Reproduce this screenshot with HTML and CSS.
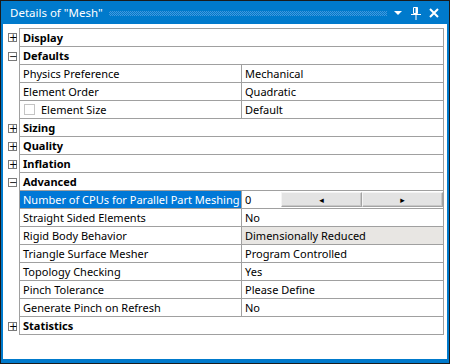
FILE: index.html
```html
<!DOCTYPE html>
<html lang="en">
<head>
    <meta charset="UTF-8">
    <title>Details of "Mesh"</title>
    <link rel="stylesheet" href="styles.css">
</head>
<body>
    <div class="window">
        <div class="titlebar">
            <span class="title">Details of "Mesh"</span>
            <span class="grip"></span>
            <span class="tb-icons">
                <svg width="10" height="6" viewBox="0 0 10 6"><path d="M1 1h8L5 5z" fill="#fff"/></svg>
                <svg width="12" height="14" viewBox="0 0 12 14"><path d="M3.5 1.5h4v6h-4z" fill="none" stroke="#fff"/><path d="M6.5 1.5v6" stroke="#fff" stroke-width="2"/><path d="M1 8.5h10M6 9v5" stroke="#fff"/></svg>
                <svg width="10" height="10" viewBox="0 0 10 10"><path d="M1 1l8 8M9 1l-8 8" stroke="#fff" stroke-width="2"/></svg>
            </span>
        </div>

        <div class="panel">
            <div class="tree">
                <div class="row group first"><span class="exp"><span class="box">+</span></span><div class="line"><div class="cell full">Display</div></div></div>
                <div class="row group"><span class="exp"><span class="box">−</span></span><div class="line"><div class="cell full">Defaults</div></div></div>
                <div class="row"><span class="exp"></span><div class="line"><div class="cell name">Physics Preference</div><div class="cell value">Mechanical</div></div></div>
                <div class="row"><span class="exp"></span><div class="line"><div class="cell name">Element Order</div><div class="cell value">Quadratic</div></div></div>
                <div class="row"><span class="exp"></span><div class="line"><div class="cell name"><span class="check"></span>Element Size</div><div class="cell value">Default</div></div></div>
                <div class="row group"><span class="exp"><span class="box">+</span></span><div class="line"><div class="cell full">Sizing</div></div></div>
                <div class="row group"><span class="exp"><span class="box">+</span></span><div class="line"><div class="cell full">Quality</div></div></div>
                <div class="row group"><span class="exp"><span class="box">+</span></span><div class="line"><div class="cell full">Inflation</div></div></div>
                <div class="row group"><span class="exp"><span class="box">−</span></span><div class="line"><div class="cell full">Advanced</div></div></div>
                <div class="row"><span class="exp"></span><div class="line"><div class="cell name selected">Number of CPUs for Parallel Part Meshing</div><div class="cell value spin-cell"><span class="spin-val">0</span><span class="spin-btn">◂</span><span class="spin-btn">▸</span></div></div></div>
                <div class="row"><span class="exp"></span><div class="line"><div class="cell name">Straight Sided Elements</div><div class="cell value">No</div></div></div>
                <div class="row"><span class="exp"></span><div class="line"><div class="cell name">Rigid Body Behavior</div><div class="cell value readonly">Dimensionally Reduced</div></div></div>
                <div class="row"><span class="exp"></span><div class="line"><div class="cell name">Triangle Surface Mesher</div><div class="cell value">Program Controlled</div></div></div>
                <div class="row"><span class="exp"></span><div class="line"><div class="cell name">Topology Checking</div><div class="cell value">Yes</div></div></div>
                <div class="row"><span class="exp"></span><div class="line"><div class="cell name">Pinch Tolerance</div><div class="cell value">Please Define</div></div></div>
                <div class="row"><span class="exp"></span><div class="line"><div class="cell name">Generate Pinch on Refresh</div><div class="cell value">No</div></div></div>
                <div class="row group"><span class="exp"><span class="box">+</span></span><div class="line"><div class="cell full">Statistics</div></div></div>
            </div>
        </div>
    </div>
</body>
</html>
```

FILE: styles.css
```css
body, html {
    margin: 0;
    padding: 0;
    font-family: "Noto Sans", "Open Sans", sans-serif;
    font-size: 11px;
    color: #000;
}

.window {
    width: 450px;
    height: 364px;
    box-sizing: border-box;
    border: 1px solid #1b1b1b;
    background-color: #007acc;
    padding: 0 2px 4px 2px;
    display: flex;
    flex-direction: column;
}

.titlebar {
    height: 23px;
    display: flex;
    align-items: center;
    color: #fff;
    font-size: 11.5px;
}

.title {
    padding-left: 7px;
    white-space: nowrap;
}

.grip {
    flex: 1;
    height: 5px;
    margin: 1px 6px 0 6px;
    background: repeating-conic-gradient(#4598dc 0 25%, transparent 0 50%) 0 0 / 2px 2px;
}

.tb-icons {
    display: flex;
    align-items: center;
    gap: 7px;
    padding-right: 8px;
}

.tb-icons svg {
    display: block;
}

.panel {
    flex: 1;
    background-color: #fff;
    padding: 4px 3px 0 0;
}

.row {
    display: flex;
}

.exp {
    width: 16px;
    flex: none;
    display: flex;
    align-items: center;
}

.box {
    width: 7px;
    height: 7px;
    margin-left: 5px;
    border: 1px solid #7a7a7a;
    font-size: 10px;
    line-height: 7px;
    text-align: center;
    font-family: "DejaVu Sans", sans-serif;
}

.line {
    flex: 1;
    display: flex;
    height: 17px;
    border: 1px solid #a0a0a0;
    border-top: none;
}

.first .line {
    border-top: 1px solid #a0a0a0;
}

.cell {
    display: flex;
    align-items: center;
    padding-left: 3px;
    white-space: nowrap;
    box-sizing: border-box;
}

.full {
    flex: 1;
    font-weight: bold;
}

.name {
    width: 222px;
    border-right: 1px solid #a0a0a0;
}

.value {
    flex: 1;
}

.selected {
    background-color: #0078d7;
    color: #fff;
}

.readonly {
    background-color: #e8e6e3;
}

.check {
    width: 9px;
    height: 9px;
    border: 1px solid #c4c4c4;
    margin: 0 6px 0 1px;
}

.spin-cell {
    padding-top: 1px;
    padding-bottom: 1px;
    align-items: stretch;
}

.spin-val {
    width: 36px;
    display: flex;
    align-items: center;
}

.spin-btn {
    flex: 1;
    display: flex;
    align-items: center;
    justify-content: center;
    background-color: #e3e3e3;
    border: 1px solid;
    border-color: #f4f4f4 #a3a3a3 #a3a3a3 #f4f4f4;
    box-shadow: inset -1px -1px 0 #c8c8c8;
    font-size: 9px;
    font-family: "DejaVu Sans", sans-serif;
}
```
